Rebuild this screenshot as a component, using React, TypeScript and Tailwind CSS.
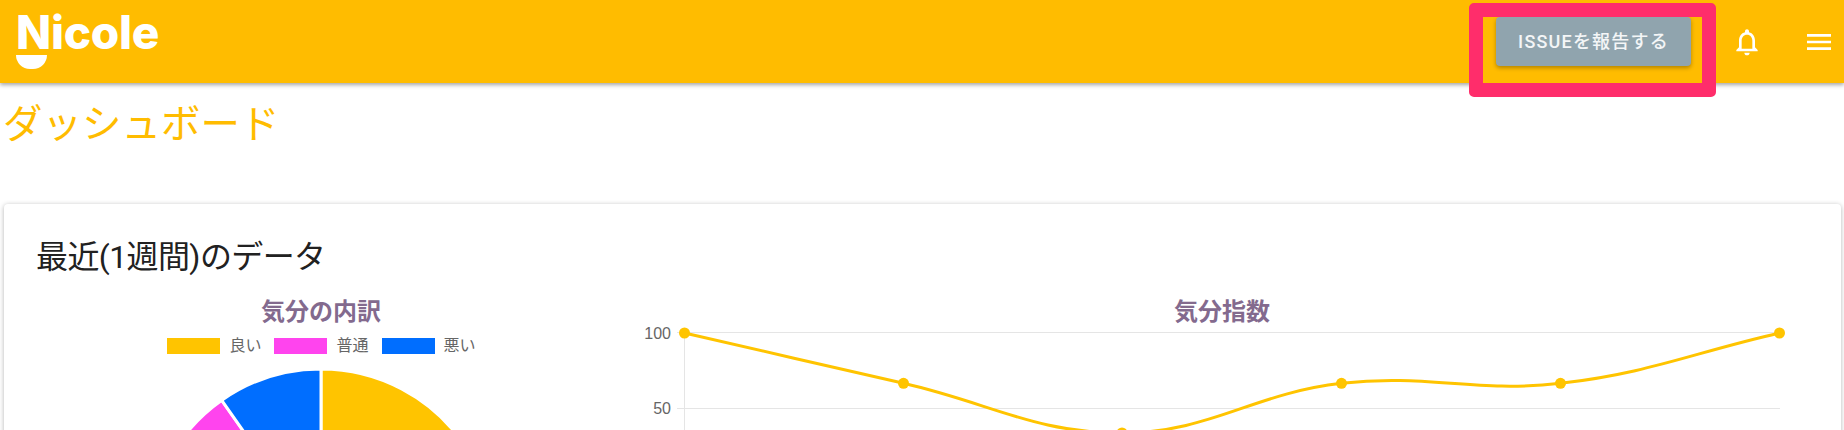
import React from 'react';

const FONT = "font-['Roboto','Noto_Sans_CJK_JP',sans-serif]";

// y positions of the mood index, x spread evenly over the plot area
const POINTS: [number, number][] = [
  [684.5, 333],
  [903.5, 383.3],
  [1122, 433],
  [1341.5, 383.3],
  [1560.5, 383.3],
  [1779.5, 333],
];

function splinePath(pts: [number, number][], t = 0.4) {
  const ctrl = pts.map((p, i) => {
    const prev = pts[i - 1] ?? p;
    const next = pts[i + 1] ?? p;
    const d01 = Math.hypot(p[0] - prev[0], p[1] - prev[1]);
    const d12 = Math.hypot(next[0] - p[0], next[1] - p[1]);
    const sum = d01 + d12 || 1;
    const fa = (t * d01) / sum;
    const fb = (t * d12) / sum;
    return {
      before: [p[0] - fa * (next[0] - prev[0]), p[1] - fa * (next[1] - prev[1])],
      after: [p[0] + fb * (next[0] - prev[0]), p[1] + fb * (next[1] - prev[1])],
    };
  });
  let d = `M${pts[0][0]} ${pts[0][1]}`;
  for (let i = 1; i < pts.length; i++) {
    const a = ctrl[i - 1].after;
    const b = ctrl[i].before;
    d += ` C${a[0]} ${a[1]} ${b[0]} ${b[1]} ${pts[i][0]} ${pts[i][1]}`;
  }
  return d;
}

function Logo() {
  return (
    <div className="flex flex-col items-start">
      <div className="font-['Inter',sans-serif] font-extrabold text-white text-[46px] leading-[34px] tracking-[-0.3px] h-[34px]">
        Nicole
      </div>
      <div className="w-[31px] h-[14px] mt-[6px] bg-white rounded-b-[16px]" />
    </div>
  );
}

function Header() {
  return (
    <header className="relative z-10 h-[83px] bg-[#ffbc00] shadow-[0_2px_4px_rgba(0,0,0,0.35)] flex items-center justify-between pl-4 pr-[9px]">
      <Logo />
      <div className="flex items-center gap-10">
        <button className="w-[195px] h-[49px] rounded bg-[#90a4ae] text-white/90 text-[18px] font-medium tracking-[1.2px] shadow-[0_2px_4px_rgba(0,0,0,0.3)]">
          ISSUEを報告する
        </button>
        <svg width="32" height="32" viewBox="0 0 24 24" fill="#fff">
          <path d="M12 22c1.1 0 2-.9 2-2h-4c0 1.1.9 2 2 2zm6-6v-5c0-3.07-1.63-5.64-4.5-6.32V4c0-.83-.67-1.5-1.5-1.5s-1.5.67-1.5 1.5v.68C7.64 5.36 6 7.92 6 11v5l-2 2v1h16v-1l-2-2zm-2 1H8v-6c0-2.48 1.51-4.5 4-4.5s4 2.02 4 4.5v6z" />
        </svg>
        <svg width="32" height="32" viewBox="0 0 24 24" fill="#fff">
          <path d="M3 18h18v-2H3v2zm0-5h18v-2H3v2zm0-7v2h18V6H3z" />
        </svg>
      </div>
      {/* red highlight drawn over the screenshot */}
      <div className="absolute left-[1469px] top-[3px] w-[247px] h-[94px] border-[14px] border-[#ff2d6b] rounded-[5px]" />
    </header>
  );
}

function LegendItem({ color, label }: { color: string; label: string }) {
  return (
    <div className="flex items-center gap-[9px]">
      <span className={`w-[53px] h-4 ${color}`} />
      <span className="text-[16px] leading-4 text-[#666]">{label}</span>
    </div>
  );
}

function PieChart() {
  const cx = 173;
  const cy = 173;
  const r = 173;
  const at = (deg: number) => {
    const a = (deg * Math.PI) / 180;
    return `${cx + r * Math.sin(a)} ${cy - r * Math.cos(a)}`;
  };
  const slice = (from: number, to: number) =>
    `M${cx} ${cy} L${at(from)} A${r} ${r} 0 ${to - from > 180 ? 1 : 0} 1 ${at(to)} Z`;
  return (
    <svg width="346" height="346" viewBox="0 0 346 346" className="shrink-0">
      <path d={slice(0, 240)} fill="#ffc400" stroke="#fff" strokeWidth="3" />
      <path d={slice(240, 325)} fill="#ff44ee" stroke="#fff" strokeWidth="3" />
      <path d={slice(325, 360)} fill="#006eff" stroke="#fff" strokeWidth="3" />
    </svg>
  );
}

function LineChart() {
  return (
    <svg width="1204" height="140" viewBox="640 300 1204 140" className="block overflow-visible">
      <text x="1222" y="320" textAnchor="middle" fontSize="24" fontWeight="700" fill="#836a8e">
        気分指数
      </text>
      <line x1="677" x2="1780" y1="332.5" y2="332.5" stroke="#e5e5e5" />
      <line x1="677" x2="1780" y1="408.5" y2="408.5" stroke="#e5e5e5" />
      <line x1="684.5" x2="684.5" y1="332" y2="440" stroke="#e5e5e5" />
      <text x="671" y="339" textAnchor="end" fontSize="16" fontFamily="Liberation Sans" fill="#666">100</text>
      <text x="671" y="414" textAnchor="end" fontSize="16" fontFamily="Liberation Sans" fill="#666">50</text>
      <path d={splinePath(POINTS)} fill="none" stroke="#ffc400" strokeWidth="3" />
      {POINTS.map(([x, y]) => (
        <circle key={x} cx={x} cy={y} r="5.5" fill="#ffc400" />
      ))}
    </svg>
  );
}

export default function App() {
  return (
    <div className={`h-[430px] overflow-hidden bg-white ${FONT}`}>
      <Header />
      <h1 className="pl-[3px] pt-[19px] text-[39.5px] leading-[46px] text-[#ffbc00] font-normal">
        ダッシュボード
      </h1>
      <section className="ml-1 mr-[3px] mt-[56px] pt-[33px] pl-[32px] pr-[33px] h-[400px] rounded-sm bg-white shadow-[0_1px_5px_rgba(0,0,0,0.3)]">
        <h2 className="text-[32px] leading-10 tracking-[-0.6px] text-[#212121] font-normal">最近(1週間)のデータ</h2>
        <div className="flex mt-[21px]">
          <div className="w-[570px] shrink-0 flex flex-col items-center">
            <div className="text-[24px] leading-7 font-bold text-[#836a8e]">気分の内訳</div>
            <div className="flex gap-[13px] mt-[12px] ml-[1px]">
              <LegendItem color="bg-[#ffc400]" label="良い" />
              <LegendItem color="bg-[#ff44ee]" label="普通" />
              <LegendItem color="bg-[#006eff]" label="悪い" />
            </div>
            <div className="mt-[15px]">
              <PieChart />
            </div>
          </div>
          <div className="ml-[34px] mt-[2px]">
            <LineChart />
          </div>
        </div>
      </section>
    </div>
  );
}
